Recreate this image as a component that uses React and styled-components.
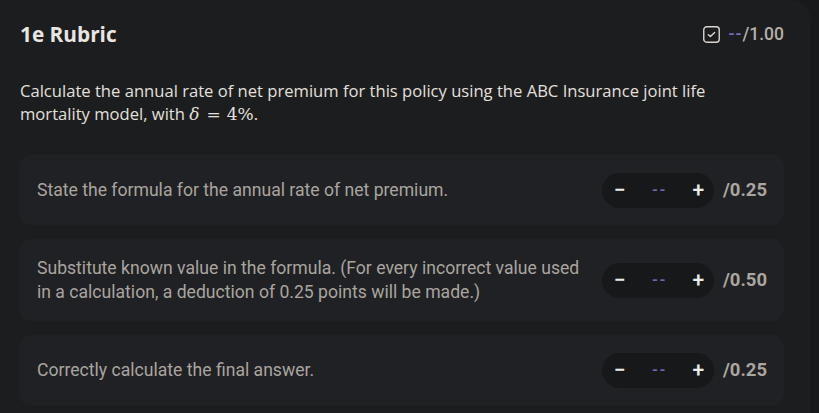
import React from 'react';
import styled, { createGlobalStyle } from 'styled-components';

const Global = createGlobalStyle`
  html, body {
    margin: 0;
    padding: 0;
    background: #18191a;
  }
  body {
    font-family: "Open Sans", "Noto Sans", sans-serif;
    -webkit-font-smoothing: antialiased;
  }
`;

const Panel = styled.div`
  box-sizing: border-box;
  width: 810px;
  height: 413px;
  background: #1c1d1f;
  border-radius: 0 18px 0 0;
  padding: 18px 26px 0 19px;
  overflow: hidden;
`;

const Header = styled.div`
  display: flex;
  align-items: center;
  justify-content: space-between;
  height: 32px;
  padding-left: 1px;
`;

const Title = styled.h2`
  margin: 0;
  font-family: "Open Sans", sans-serif;
  font-weight: 700;
  font-size: 20.8px;
  color: #e9e6e1;
`;

const Total = styled.div`
  display: flex;
  align-items: center;
  gap: 9px;
  font-family: Roboto, sans-serif;
  font-weight: 500;
  font-size: 17.5px;
  color: #b3afa8;
`;

const Dashes = styled.span`
  color: #7a68b8;
  letter-spacing: 1px;
`;

const Question = styled.p`
  margin: 29px 0 0 1px;
  font-family: "Open Sans", sans-serif;
  font-size: 16.6px;
  line-height: 23px;
  color: #e3e0db;
  max-width: 720px;
`;

const Math = styled.span`
  display: inline-block;
  font-family: "DejaVu Serif", "Liberation Serif", serif;
  font-size: 17px;
  line-height: 18px;
`;

const MathVar = styled.span`
  font-style: italic;
  margin-right: 7px;
`;

const MathOp = styled.span`
  margin-right: 6px;
`;

const Items = styled.div`
  display: flex;
  flex-direction: column;
  gap: 14px;
  margin-top: 30px;
`;

const Item = styled.div`
  box-sizing: border-box;
  display: flex;
  align-items: center;
  justify-content: space-between;
  gap: 20px;
  min-height: 70px;
  padding: 17px 17px 17px 18px;
  background: #202124;
  border-radius: 12px;
`;

const ItemText = styled.div`
  font-family: Roboto, sans-serif;
  font-size: 17.6px;
  line-height: 24px;
  color: #a9a59e;
  max-width: 552px;
`;

const Controls = styled.div`
  display: flex;
  align-items: center;
  gap: 9px;
  flex-shrink: 0;
`;

const Stepper = styled.div`
  display: grid;
  grid-template-columns: 36px 40px 36px;
  align-items: center;
  height: 35px;
  border-radius: 18px;
  background: #171819;
`;

const StepButton = styled.button`
  border: none;
  background: none;
  padding: 0 0 0 ${(p) => (p.$plus ? '5px' : '0')};
  font-family: Roboto, sans-serif;
  font-size: 21px;
  font-weight: 500;
  color: #eceae6;
  cursor: pointer;
  text-align: center;
  line-height: 35px;
`;

const StepValue = styled.span`
  text-align: center;
  font-family: Roboto, sans-serif;
  font-size: 15px;
  font-weight: 700;
  color: #7566b0;
  letter-spacing: 1.5px;
  padding-left: 3px;
`;

const Max = styled.span`
  font-family: Roboto, sans-serif;
  font-weight: 700;
  font-size: 18.5px;
  color: #aaa69f;
`;

const CheckIcon = () => (
  <svg width="17" height="17" viewBox="0 0 17 17" fill="none">
    <rect x="0.75" y="0.75" width="15.5" height="15.5" rx="3" stroke="#d9d6d1" strokeWidth="1.4" />
    <path d="M5.3 8.7 L7.4 10.6 L11.6 6.4" stroke="#d9d6d1" strokeWidth="1.4" strokeLinecap="round" strokeLinejoin="round" />
  </svg>
);

const criteria = [
  { text: 'State the formula for the annual rate of net premium.', max: '0.25' },
  {
    text: 'Substitute known value in the formula. (For every incorrect value used in a calculation, a deduction of 0.25 points will be made.)',
    max: '0.50',
  },
  { text: 'Correctly calculate the final answer.', max: '0.25' },
];

export default function App() {
  return (
    <>
      <Global />
      <Panel>
        <Header>
          <Title>1e Rubric</Title>
          <Total>
            <CheckIcon />
            <span>
              <Dashes>--</Dashes>/1.00
            </span>
          </Total>
        </Header>
        <Question>
          Calculate the annual rate of net premium for this policy using the ABC Insurance joint life
          mortality model, with{' '}
          <Math>
            <MathVar>δ</MathVar>
            <MathOp>=</MathOp>
            <span>4%</span>
          </Math>
          .
        </Question>
        <Items>
          {criteria.map((c, i) => (
            <Item key={i}>
              <ItemText>{c.text}</ItemText>
              <Controls>
                <Stepper>
                  <StepButton>−</StepButton>
                  <StepValue>--</StepValue>
                  <StepButton $plus>+</StepButton>
                </Stepper>
                <Max>/{c.max}</Max>
              </Controls>
            </Item>
          ))}
        </Items>
      </Panel>
    </>
  );
}
